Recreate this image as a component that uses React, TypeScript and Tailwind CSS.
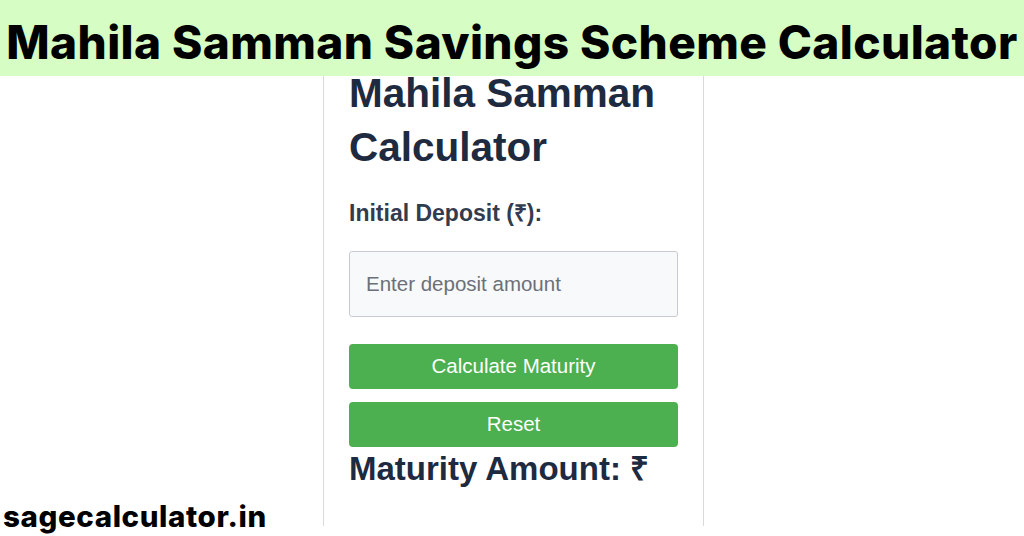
import React from "react";

export default function App() {
  return (
    <div className="relative w-[1024px] h-[536px] overflow-hidden bg-white">
      <div className="relative z-10 h-[76px] bg-[#d5fdc4] flex items-end justify-center pb-[5px]">
        <h1 className="font-['Inter',sans-serif] font-extrabold text-[46px] leading-[58px] text-black tracking-[0.4px] whitespace-nowrap">
          Mahila Samman Savings Scheme Calculator
        </h1>
      </div>
      <div className="ml-[323px] w-[381px] h-[460px] border-x border-[#d9d9d9] px-[25px] font-['Liberation_Sans',Arial,sans-serif]">
        <h2 className="mt-[-10px] text-[40.5px] leading-[54px] font-bold text-[#1e2a3f] whitespace-nowrap">
          Mahila Samman
          <br />
          Calculator
        </h2>
        <label className="block mt-[27px] text-[23px] leading-[24px] font-bold text-[#333c4e]">
          Initial Deposit (₹):
        </label>
        <div className="mt-[26px] h-[66px] rounded-[3px] border border-[#c8cbd0] bg-[#f8f9fa] flex items-center px-[16px] text-[20.5px] text-[#6b7078]">
          Enter deposit amount
        </div>
        <button className="mt-[27px] w-full h-[45px] rounded-[4px] bg-[#4caf50] text-white text-[20.5px] flex items-center justify-center">
          Calculate Maturity
        </button>
        <button className="mt-[13px] w-full h-[45px] rounded-[4px] bg-[#4caf50] text-white text-[20.5px] flex items-center justify-center">
          Reset
        </button>
        <div className="mt-[5px] text-[33px] leading-[34px] font-bold text-[#1e2a3f] whitespace-nowrap">
          Maturity Amount: ₹
        </div>
      </div>
      <div className="absolute left-[3px] bottom-[4px] font-['Inter',sans-serif] font-extrabold text-[29.5px] leading-[32px] tracking-[0.6px] text-black">
        sagecalculator.in
      </div>
    </div>
  );
}
